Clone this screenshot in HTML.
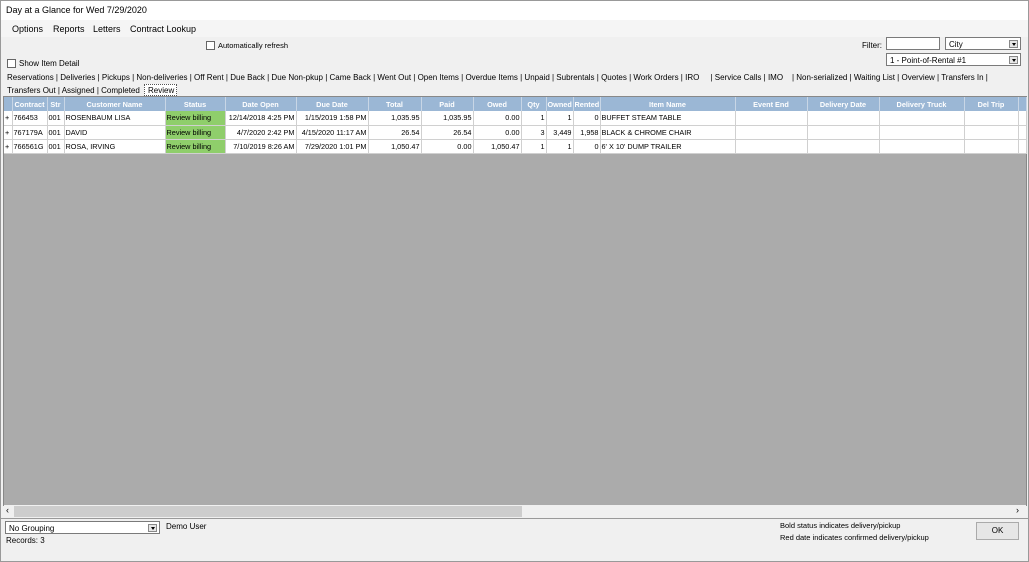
<!DOCTYPE html>
<html><head><meta charset="utf-8"><style>
*{box-sizing:border-box;margin:0;padding:0}
body{width:1029px;height:562px;background:#f0f0f0;font-family:"Liberation Sans",sans-serif;font-size:8px;color:#000;position:relative;overflow:hidden}
.a{position:absolute;white-space:nowrap}
.cb{position:absolute;width:9px;height:9px;border:1px solid #666;background:#fff}
.sel{position:absolute;height:13px;border:1px solid #7a7a7a;background:#fff;padding:2px 3px;font-size:8px}
.sel b{position:absolute;right:2px;top:2px;width:9px;height:8px;border:1px solid #888;background:#e6e6e6}
.sel b:after{content:"";position:absolute;left:2px;top:2px;border-left:2px solid transparent;border-right:2px solid transparent;border-top:3px solid #000}
table{position:absolute;left:4px;top:97px;width:1022px;border-collapse:collapse;table-layout:fixed;font-size:7.3px}
td,th{height:14px;border-right:1px solid #d0d0d0;border-bottom:1px solid #d0d0d0;padding:0 1px;overflow:hidden;white-space:nowrap}
th{background:#9bb7d5;color:#fff;font-weight:bold;text-align:center;border-right:1px solid #c8d6e6;border-bottom:none}
td{background:#fff}
.r{text-align:right}
.st{background:#8fce6b}
</style></head><body>
<div class="a" style="left:0;top:0;width:1029px;height:20px;background:#fff;border:1px solid #aaa;border-bottom:none"></div>
<div class="a" style="left:6px;top:5px;font-size:9px">Day at a Glance for Wed 7/29/2020</div>
<div class="a" style="left:1px;top:20px;width:1027px;height:17px;background:#f5f5f5"></div>
<div class="a" style="left:12px;top:24px;font-size:9px">Options</div>
<div class="a" style="left:53px;top:24px;font-size:9px">Reports</div>
<div class="a" style="left:93px;top:24px;font-size:9px">Letters</div>
<div class="a" style="left:130px;top:24px;font-size:9px">Contract Lookup</div>
<div class="cb" style="left:206px;top:41px"></div>
<div class="a" style="left:218px;top:41px;font-size:7.5px">Automatically refresh</div>
<div class="cb" style="left:7px;top:59px"></div>
<div class="a" style="left:19px;top:59px;font-size:8px">Show Item Detail</div>
<div class="a" style="left:862px;top:41px">Filter:</div>
<div class="a" style="left:886px;top:37px;width:54px;height:13px;border:1px solid #7a7a7a;background:#fff"></div>
<div class="sel" style="left:945px;top:37px;width:76px">City<b></b></div>
<div class="sel" style="left:886px;top:53px;width:135px">1 - Point-of-Rental #1<b></b></div>
<div class="a" style="left:7px;top:73px;font-size:8px">Reservations | Deliveries | Pickups | Non-deliveries | Off Rent | Due Back | Due Non-pkup | Came Back | Went Out | Open Items | Overdue Items | Unpaid | Subrentals | Quotes | Work Orders | IRO &nbsp;&nbsp;&nbsp;&nbsp;| Service Calls | IMO &nbsp;&nbsp;&nbsp;| Non-serialized | Waiting List | Overview | Transfers In |</div>
<div class="a" style="left:7px;top:86px;font-size:8px">Transfers Out | Assigned | Completed</div>
<div class="a" style="left:144px;top:84px;width:33px;height:12px;border:1px dotted #555;background:#fff;padding:1px 3px;font-size:8px">Review</div>
<div class="a" style="left:3px;top:96px;width:1024px;height:410px;background:#ababab;border:1px solid #888"></div>
<table>
<colgroup><col style="width:8px"><col style="width:35px"><col style="width:17px"><col style="width:101px"><col style="width:60px"><col style="width:71px"><col style="width:72px"><col style="width:53px"><col style="width:52px"><col style="width:48px"><col style="width:25px"><col style="width:27px"><col style="width:27px"><col style="width:135px"><col style="width:72px"><col style="width:72px"><col style="width:85px"><col style="width:54px"><col style="width:8px"></colgroup>
<tr><th></th><th>Contract</th><th>Str</th><th>Customer Name</th><th>Status</th><th>Date Open</th><th>Due Date</th><th>Total</th><th>Paid</th><th>Owed</th><th>Qty</th><th>Owned</th><th>Rented</th><th>Item Name</th><th>Event End</th><th>Delivery Date</th><th>Delivery Truck</th><th>Del Trip</th><th></th></tr>
<tr><td>+</td><td>766453</td><td>001</td><td>ROSENBAUM LISA</td><td class="st">Review billing</td><td class="r">12/14/2018 4:25 PM</td><td class="r">1/15/2019 1:58 PM</td><td class="r">1,035.95</td><td class="r">1,035.95</td><td class="r">0.00</td><td class="r">1</td><td class="r">1</td><td class="r">0</td><td>BUFFET STEAM TABLE</td><td></td><td></td><td></td><td></td><td></td></tr>
<tr><td>+</td><td>767179A</td><td>001</td><td>DAVID</td><td class="st">Review billing</td><td class="r">4/7/2020 2:42 PM</td><td class="r">4/15/2020 11:17 AM</td><td class="r">26.54</td><td class="r">26.54</td><td class="r">0.00</td><td class="r">3</td><td class="r">3,449</td><td class="r">1,958</td><td>BLACK &amp; CHROME CHAIR</td><td></td><td></td><td></td><td></td><td></td></tr>
<tr><td>+</td><td>766561G</td><td>001</td><td>ROSA, IRVING</td><td class="st">Review billing</td><td class="r">7/10/2019 8:26 AM</td><td class="r">7/29/2020 1:01 PM</td><td class="r">1,050.47</td><td class="r">0.00</td><td class="r">1,050.47</td><td class="r">1</td><td class="r">1</td><td class="r">0</td><td>6' X 10' DUMP TRAILER</td><td></td><td></td><td></td><td></td><td></td></tr>
</table>
<div class="a" style="left:4px;top:505px;width:1022px;height:13px;background:#f0f0f0"></div>
<div class="a" style="left:14px;top:506px;width:508px;height:11px;background:#cdcdcd"></div>
<div class="a" style="left:6px;top:505px;font-size:9px">‹</div>
<div class="a" style="left:1016px;top:505px;font-size:9px">›</div>
<div class="a" style="left:1px;top:518px;width:1027px;height:1px;background:#999"></div>
<div class="sel" style="left:5px;top:521px;width:155px">No Grouping<b></b></div>
<div class="a" style="left:166px;top:522px">Demo User</div>
<div class="a" style="left:6px;top:536px">Records: 3</div>
<div class="a" style="left:780px;top:521px;font-size:7.5px">Bold status indicates delivery/pickup</div>
<div class="a" style="left:780px;top:533px;font-size:7.5px">Red date indicates confirmed delivery/pickup</div>
<div class="a" style="left:976px;top:522px;width:43px;height:18px;border:1px solid #aaa;background:#e6e6e6;text-align:center;line-height:16px">OK</div>
<div class="a" style="left:0;top:0;width:1029px;height:562px;border:1px solid #999"></div>
</body></html>
